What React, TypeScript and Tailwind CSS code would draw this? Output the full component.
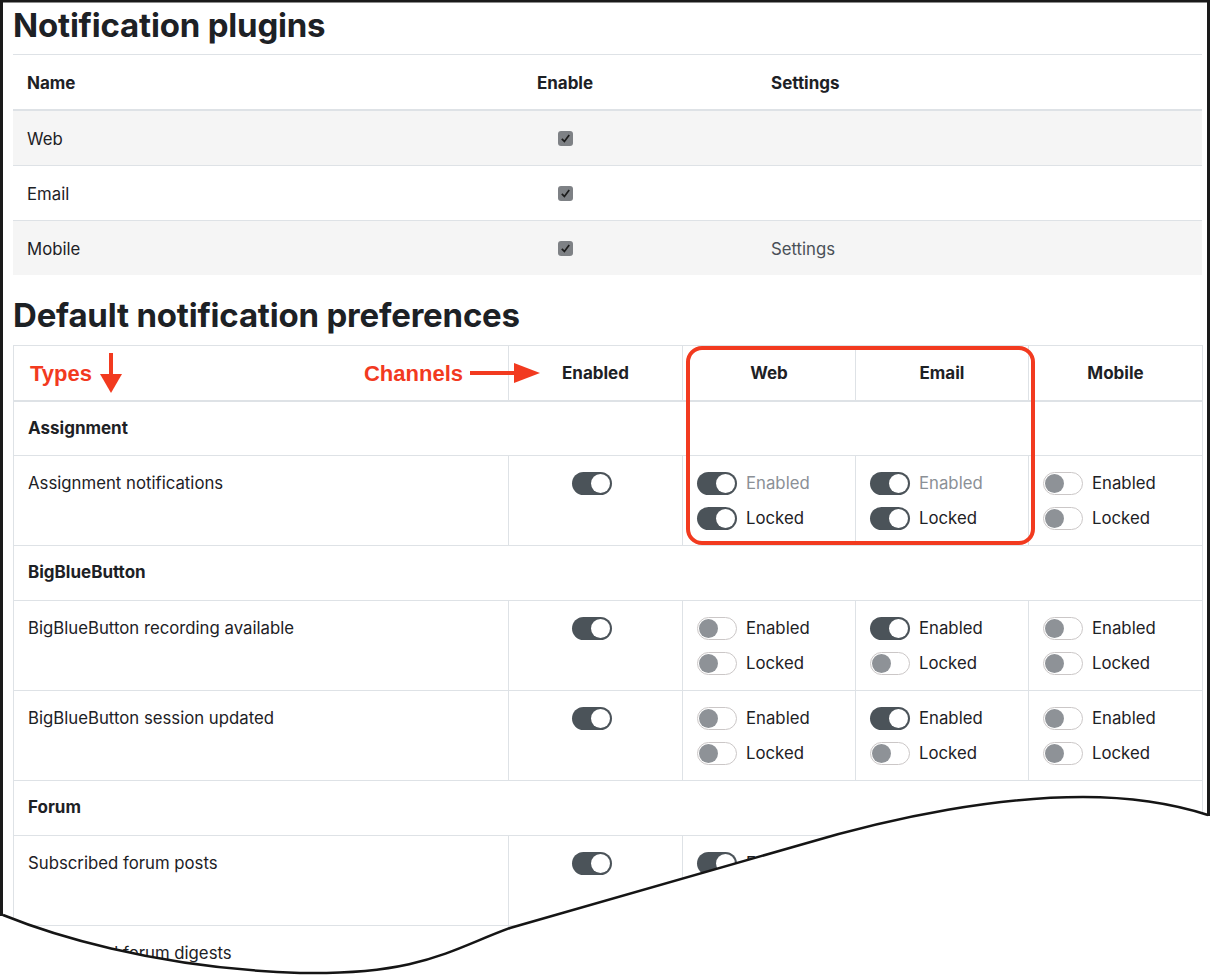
import React from "react";

type Pair = [boolean, boolean];

type Row =
  | { kind: "cat"; label: string; first?: boolean }
  | {
      kind: "item";
      label: string;
      enabled: boolean;
      web: Pair;
      email: Pair;
      mobile: Pair;
      dim?: boolean;
    };

const rows: Row[] = [
  { kind: "cat", label: "Assignment", first: true },
  {
    kind: "item",
    label: "Assignment notifications",
    enabled: true,
    web: [true, true],
    email: [true, true],
    mobile: [false, false],
    dim: true,
  },
  { kind: "cat", label: "BigBlueButton" },
  {
    kind: "item",
    label: "BigBlueButton recording available",
    enabled: true,
    web: [false, false],
    email: [true, false],
    mobile: [false, false],
  },
  {
    kind: "item",
    label: "BigBlueButton session updated",
    enabled: true,
    web: [false, false],
    email: [true, false],
    mobile: [false, false],
  },
  { kind: "cat", label: "Forum" },
  {
    kind: "item",
    label: "Subscribed forum posts",
    enabled: true,
    web: [true, false],
    email: [true, false],
    mobile: [false, false],
  },
  {
    kind: "item",
    label: "Subscribed forum digests",
    enabled: true,
    web: [false, false],
    email: [false, false],
    mobile: [false, false],
  },
];

const plugins = [
  { name: "Web", settings: false },
  { name: "Email", settings: false },
  { name: "Mobile", settings: true },
];

function Toggle({ on }: { on: boolean }) {
  if (on) {
    return (
      <span className="flex h-[23px] w-[40px] shrink-0 items-center justify-end rounded-full bg-[#4b5359] px-[2px]">
        <span className="h-[19px] w-[19px] rounded-full bg-white" />
      </span>
    );
  }
  return (
    <span className="flex h-[23px] w-[40px] shrink-0 items-center justify-start rounded-full border border-[#cbc7c7] bg-white px-[1px]">
      <span className="h-[19px] w-[19px] rounded-full bg-[#8e9297]" />
    </span>
  );
}

function Checkbox() {
  return (
    <span className="inline-flex h-[15px] w-[15px] items-center justify-center rounded-[3px] bg-[#7e8185]">
      <svg viewBox="0 0 15 15" width="15" height="15">
        <path d="M3.8 7.9 L6.4 10.4 L11.2 4" stroke="#1c1c1c" strokeWidth="1.7" fill="none" />
      </svg>
    </span>
  );
}

function ChannelCell({ pair, dim }: { pair: Pair; dim?: boolean }) {
  return (
    <div className="flex flex-col gap-[12px] border-l border-[#dee2e6] pl-[14px] pt-[16px]">
      <div className="flex items-center gap-[9px]">
        <Toggle on={pair[0]} />
        <span className={dim ? "leading-[23px] text-[#8b9096]" : "leading-[23px]"}>Enabled</span>
      </div>
      <div className="flex items-center gap-[9px]">
        <Toggle on={pair[1]} />
        <span className="leading-[23px]">Locked</span>
      </div>
    </div>
  );
}

export default function App() {
  return (
    <div className="relative h-[978px] w-[1210px] overflow-hidden bg-white font-['Inter'] text-[16.75px] text-[#1d2125]">
      <div className="pl-[13px] pr-[8px] pt-[7px]">
        <h2 className="text-[33px] font-bold leading-[36px] tracking-[-0.2px]">Notification plugins</h2>

        {/* plugins table */}
        <div className="mt-[11px] border-t border-[#dee2e6]">
          <div className="grid h-[56px] grid-cols-[360px_384px_445px] items-center border-b-2 border-[#dee2e6] pt-[3px] text-[17px] font-bold">
            <div className="pl-[14px]">Name</div>
            <div className="text-center">Enable</div>
            <div className="pl-[14px]">Settings</div>
          </div>
          {plugins.map((p, i) => (
            <div
              key={p.name}
              className={
                "grid grid-cols-[360px_384px_445px] items-center " +
                (i % 2 === 0 ? "bg-[#f5f5f5] " : "bg-white ") +
                (i < plugins.length - 1 ? "h-[55px] border-b border-[#dee2e6]" : "h-[54px]")
              }
            >
              <div className="pl-[14px] pt-[4px]">{p.name}</div>
              <div className="flex justify-center">
                <Checkbox />
              </div>
              <div className="pl-[14px] pt-[4px] text-[#495057]">{p.settings ? "Settings" : ""}</div>
            </div>
          ))}
        </div>

        <h2 className="mt-[22px] text-[33px] font-bold leading-[36px] tracking-[-0.2px]">
          Default notification preferences
        </h2>

        {/* preferences table */}
        <div className="mt-[12px] w-[1190px] border border-[#dee2e6]">
          <div className="grid h-[56px] grid-cols-[494px_174px_173px_173px_174px] border-b-2 border-[#dee2e6] text-[17px] font-bold">
            <div className="flex items-center pl-[16px] font-['Liberation_Sans'] text-[22px] font-bold text-[#f23a1f]">
              <span>Types</span>
              <svg width="22" height="40" viewBox="0 0 22 40" className="ml-[8px]">
                <rect x="9" y="0" width="4" height="24" fill="#f23a1f" />
                <polygon points="0,21 22,21 11,40" fill="#f23a1f" />
              </svg>
              <span className="ml-auto">Channels</span>
              <svg width="70" height="22" viewBox="0 0 70 22" className="relative z-10 ml-[7px] mr-[-32px]">
                <rect x="0" y="9" width="46" height="4" fill="#f23a1f" />
                <polygon points="44,1 70,11 44,21" fill="#f23a1f" />
              </svg>
            </div>
            <div className="flex items-center justify-center border-l border-[#dee2e6] pt-[1px]">Enabled</div>
            <div className="flex items-center justify-center border-l border-[#dee2e6] pt-[1px]">Web</div>
            <div className="flex items-center justify-center border-l border-[#dee2e6] pt-[1px]">Email</div>
            <div className="flex items-center justify-center border-l border-[#dee2e6] pt-[1px]">Mobile</div>
          </div>

          {rows.map((r) =>
            r.kind === "cat" ? (
              <div
                key={r.label}
                className={
                  "flex items-center border-b border-[#dee2e6] pl-[14px] text-[17px] font-bold " +
                  (r.first ? "h-[54px]" : "h-[55px]")
                }
              >
                {r.label}
              </div>
            ) : (
              <div
                key={r.label}
                className="grid h-[90px] grid-cols-[494px_174px_173px_173px_174px] border-b border-[#dee2e6]"
              >
                <div className="pl-[14px] pt-[15px] leading-[24px]">{r.label}</div>
                <div className="flex justify-center border-l border-[#dee2e6] pr-[8px] pt-[16px]">
                  <div>
                    <Toggle on={r.enabled} />
                  </div>
                </div>
                <ChannelCell pair={r.web} dim={r.dim} />
                <ChannelCell pair={r.email} dim={r.dim} />
                <ChannelCell pair={r.mobile} />
              </div>
            )
          )}
        </div>
      </div>

      {/* annotation box around web/email */}
      <div className="absolute left-[686px] top-[346px] h-[199px] w-[349px] rounded-[16px] border-[4px] border-[#f23a1f]" />

      {/* torn page edge and frame */}
      <svg
        className="pointer-events-none absolute left-0 top-0 z-20"
        width="1210"
        height="978"
        viewBox="0 0 1210 978"
      >
        <path
          d="M0,915 L3,915 C45,932 150,968 300,973 C420,975 450,950 510,928 L800,845 C900,815 1000,797 1083,797 C1140,797 1180,806 1208,815 L1210,815 L1210,978 L0,978 Z"
          fill="#ffffff"
        />
        <path
          d="M3,915 C45,932 150,968 300,973 C420,975 450,950 510,928 L800,845 C900,815 1000,797 1083,797 C1140,797 1180,806 1208,815"
          fill="none"
          stroke="#151515"
          strokeWidth="2.5"
        />
        <path d="M1.5,916 L1.5,1 L1208.5,1 L1208.5,816" fill="none" stroke="#1a1a1a" strokeWidth="3" />
      </svg>
    </div>
  );
}
